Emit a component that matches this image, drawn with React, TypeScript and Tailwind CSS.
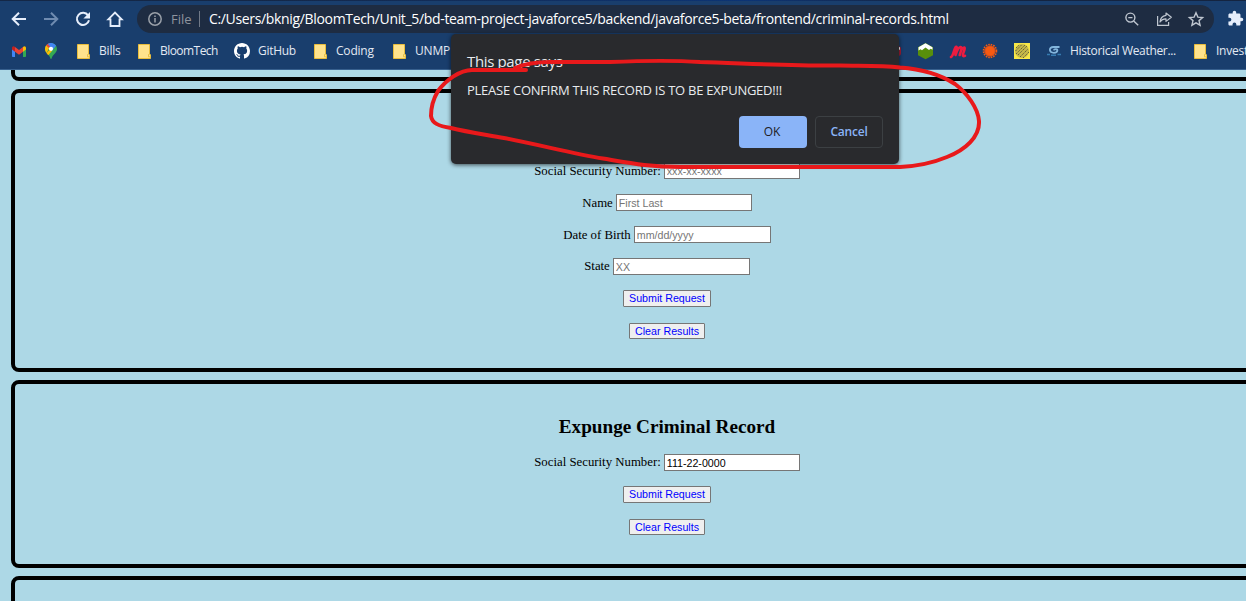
import type { ReactNode } from "react";

const ui = "font-['Open_Sans','Noto_Sans',sans-serif]";

function Folder() {
  return (
    <svg width="13" height="15" viewBox="0 0 13 15" className="block shrink-0">
      <path d="M0.5 0.5h11v9.6l1 .6v3.8h-12z" fill="#ffe38c" stroke="#e9bd3c" />
      <path d="M10.5 10.2v2.6h2" fill="none" stroke="#e9bd3c" strokeWidth=".9" />
    </svg>
  );
}

function Toolbar() {
  return (
    <div className="flex h-8 items-center pl-[11px]">
      <svg width="116" height="32" viewBox="11 2 116 32" className="block shrink-0" fill="none" stroke="#e6eefb" strokeWidth="2">
        <path d="M26 19H13M19 12.7L12.7 19L19 25.3" />
        <path d="M44 19H57M51 12.7L57.3 19L51 25.3" stroke="#6f8bb0" />
        <path d="M88.1 15.4A6.1 6.1 0 1 0 89 20.3" />
        <path d="M90 12v6.6h-6.6z" fill="#e6eefb" stroke="none" />
        <path d="M108.3 19.3L115 12.5L121.7 19.3H119.5V26H110.5V19.3Z" strokeWidth="1.8" />
      </svg>
      <div className="ml-[10px] mt-px flex h-7 w-[1077px] shrink-0 items-center rounded-full bg-[#1e2c42] pl-[11px]">
        <svg width="14" height="14" viewBox="0 0 14 14" className="block shrink-0" fill="none" stroke="#9aa0a9" strokeWidth="1.5">
          <circle cx="7" cy="7" r="6.2" />
          <path d="M7 6.1V10.4M7 3.4V4.9" />
        </svg>
        <span className="ml-[9px] w-[28px] shrink-0 whitespace-nowrap text-[13px] leading-5 text-[#8e949e]">File</span>
        <span className="h-4 w-px shrink-0 bg-[#717987]" />
        <span className="ml-[9px] w-[914px] shrink-0 whitespace-nowrap text-[14px] leading-5 tracking-[-0.34px] text-white">
          C:/Users/bknig/BloomTech/Unit_5/bd-team-project-javaforce5/backend/javaforce5-beta/frontend/criminal-records.html
        </span>
        <svg width="82" height="20" viewBox="1123 9 82 20" className="block shrink-0" fill="none" stroke="#bfc6d0" strokeWidth="1.4">
          <circle cx="1130.4" cy="17.6" r="4.5" />
          <path d="M1133.7 20.9L1138.2 25.3M1128.3 17.6h4.2" />
          <path d="M1157.6 16V25.3H1168.6V22" strokeWidth="1.2" />
          <path d="M1166 13L1171.3 17.3L1166 21.4V18.9C1162.9 18.8 1161.3 20 1160 22C1160.3 18.2 1162.3 15.8 1166 15.3Z" strokeWidth="1.2" strokeLinejoin="round" />
          <path d="M1196 12.7L1197.9 17.1L1202.6 17.5L1199 20.6L1200.1 25.2L1196 22.8L1191.9 25.2L1193 20.6L1189.4 17.5L1194.1 17.1Z" />
        </svg>
      </div>
      <svg width="17" height="17" viewBox="0 0 24 24" className="ml-[13px] block shrink-0" fill="#e6eefb">
        <path d="M20.5 11H19V7c0-1.1-.9-2-2-2h-4V3.5a2.5 2.5 0 0 0-5 0V5H4c-1.1 0-2 .9-2 2v3.8h1.5a2.7 2.7 0 0 1 0 5.4H2V20c0 1.1.9 2 2 2h3.8v-1.5a2.7 2.7 0 0 1 5.4 0V22H17c1.1 0 2-.9 2-2v-4h1.5a2.5 2.5 0 0 0 0-5z" />
      </svg>
    </div>
  );
}

function Label({ children, className }: { children: ReactNode; className: string }) {
  return <span className={`shrink-0 whitespace-nowrap text-[12px] leading-4 text-[#e3e9f3] ${className}`}>{children}</span>;
}

function Bookmarks() {
  return (
    <div className="flex h-8 items-center pl-3">
      <svg width="14" height="11" viewBox="0 0 14 11" className="block shrink-0">
        <path d="M0 2v8.2c0 .5.3.8.8.8H3V4z" fill="#4285f4" />
        <path d="M14 2v8.2c0 .5-.3.8-.8.8H11V4z" fill="#34a853" />
        <path d="M3 1v4.8l4 3 4-3V1L7 4z" fill="#ea4335" />
        <path d="M0 2.2C0 .3 1.7-.3 3 1v4.8L0 3.6z" fill="#c5221f" />
        <path d="M14 2.2C14 .3 12.3-.3 11 1v4.8l3-2.2z" fill="#fbbc04" />
      </svg>
      <svg width="12" height="16" viewBox="0 0 12 16" className="ml-[19px] block shrink-0">
        <path d="M6 0a6 6 0 0 1 6 6c0 4-4.500 5.500-5.300 9.200-.2 1-1.200 1-1.400 0C4.500 11.500 0 10 0 6a6 6 0 0 1 6-6z" fill="#34a853" />
        <path d="M1.300 2.200L4.400 4.700L1.500 10C.5 8.600 0 7.500 0 6c0-1.500.5-2.800 1.300-3.800z" fill="#fbbc04" />
        <path d="M1.300 2.200A6 6 0 0 1 6 0l-1.600 4.700z" fill="#ea4335" />
        <path d="M3.500.5a6 6 0 0 1 7.600 2.300L7.600 7 4.400 4.700 2 2.700z" fill="#4285f4" />
        <path d="M1.300 2.200L2.600 1.100L5 3.500L4 5z" fill="#ea4335" />
        <path d="M4.200 7.200L7.400 7.500L3.200 12.300L1.500 10z" fill="#fbbc04" />
        <circle cx="6" cy="5.800" r="2.100" fill="#fff" />
      </svg>
      <div className="ml-5 flex shrink-0 items-center"><Folder /><Label className="ml-[9px] w-[39px] tracking-[-0.2px]">Bills</Label></div>
      <div className="flex shrink-0 items-center"><Folder /><Label className="ml-[9px] w-[74px] tracking-[-0.55px]">BloomTech</Label></div>
      <svg width="16" height="16" viewBox="0 0 16 16" className="block shrink-0" fill="#fff">
        <path d="M8 0C3.580 0 0 3.580 0 8c0 3.540 2.290 6.530 5.470 7.590.4.070.55-.17.55-.38v-1.490c-2.230.48-2.690-.94-2.690-.94-.36-.92-.89-1.170-.89-1.170-.73-.5.060-.49.060-.49.8.060 1.230.83 1.230.83.71 1.220 1.870.87 2.330.66.070-.52.280-.87.5-1.070-1.770-.2-3.640-.89-3.640-3.950 0-.87.31-1.590.82-2.150-.08-.2-.36-1.020.080-2.120 0 0 .67-.21 2.200.82a7.600 7.600 0 0 1 4 0c1.530-1.040 2.200-.82 2.200-.82.44 1.100.16 1.920.080 2.120.51.56.82 1.270.82 2.150 0 3.070-1.870 3.750-3.650 3.950.29.25.54.73.54 1.480v2.200c0 .21.150.46.55.38A8 8 0 0 0 16 8c0-4.420-3.580-8-8-8z" />
      </svg>
      <Label className="ml-2 w-[56px] tracking-[-0.3px]">GitHub</Label>
      <div className="flex shrink-0 items-center"><Folder /><Label className="ml-[9px] w-[57px] tracking-[-0.2px]">Coding</Label></div>
      <div className="flex w-[494px] shrink-0 items-center"><Folder /><Label className="ml-[9px] tracking-[-0.2px]">UNMP</Label></div>
      <svg width="150" height="20" viewBox="887 41 150 20" className="block shrink-0">
        <rect x="887" y="46" width="14" height="10" rx="3" fill="#a31e35" />
        <path d="M897 48l3-1v3z" fill="#fff" />
        <path d="M925.500 43L933 47.300V55.200L925.500 59.300L918 55.200V47.300Z" fill="#588f0b" />
        <path d="M925.500 43.200L932.500 47.300V49.800L930.700 48.800L929 50L925.500 47.600L922 50.300L920.500 49.200L918.500 50.600V47.300Z" fill="#fff" />
        <path d="M951 57C953.500 56 953.600 49.600 955.700 47C957.900 46.200 956.900 50.500 955.500 55C957 50.300 958.700 47.300 960.600 47C962.500 47 960.900 51.500 959.700 55C961 50.500 962.700 47.300 964.500 47.600C965.900 48.500 962 54.300 963 55.700C963.700 56.500 964.500 56 965 55.800" fill="none" stroke="#ed1c40" strokeWidth="2.600" strokeLinecap="round" strokeLinejoin="round" />
        <circle cx="990" cy="51" r="5.600" fill="#f75a12" />
        <circle cx="990" cy="51" r="6.500" fill="none" stroke="#f75a12" strokeWidth="1.600" strokeDasharray="1.550 1" />
        <circle cx="990" cy="51" r="5" fill="none" stroke="#b94423" strokeWidth=".5" />
        <rect x="1014" y="43" width="16" height="16" fill="#f7e748" />
        <circle cx="1022" cy="51" r="7" fill="#c5b848" />
        <path d="M1016 48l3-3M1015.500 51l6.500-6.500M1016 54l9-9M1018 55l9-9M1020 57l8-8M1023 58l6-6" stroke="#635f3c" strokeWidth="1" strokeDasharray="1.500 .8" />
      </svg>
      <svg width="14" height="12" viewBox="0 0 14 12" className="ml-[10px] block shrink-0" fill="none">
        <path d="M12.500 2H6.500C3.800 2 2.600 3.600 2.900 5.200C3.600 8.700 10.300 8.600 10.400 5.200C10.400 3.700 7 3.700 6.800 5.300" stroke="#83b5dc" strokeWidth="1.800" />
        <path d="M0 9.600h3m1 .7h5M10.500 9.600H14" stroke="#367bb1" strokeWidth="1.500" />
      </svg>
      <Label className="ml-[9px] w-[124px] tracking-[-0.33px]">Historical Weather...</Label>
      <div className="flex shrink-0 items-center"><Folder /><Label className="ml-[9px] tracking-[-0.25px]">Invest</Label></div>
    </div>
  );
}

function Field({ label, placeholder, value, className = "w-[136px]", labelClass = "" }: { label: string; placeholder?: string; value?: string; className?: string; labelClass?: string }) {
  return (
    <label className="mb-[15px] flex h-[17px] items-center justify-center gap-[3px] text-[12.8px] leading-[17px] text-black">
      <span className={`whitespace-nowrap ${labelClass}`}>{label}</span>
      <input
        className={`h-[17px] rounded-none border border-[#767676] bg-white px-[2px] py-0 font-['Liberation_Sans',sans-serif] text-[10.67px] leading-[15px] text-black placeholder:text-[#757575] ${className}`}
        placeholder={placeholder}
        defaultValue={value}
      />
    </label>
  );
}

function Actions() {
  const base = "block rounded-[1px] border border-[#767676] bg-[#efefef] p-0 text-center font-['Liberation_Sans',sans-serif] text-[10.67px] text-[#0000ff]";
  return (
    <div className="flex flex-col items-center gap-4">
      <button className={`${base} h-[17px] w-[88px] leading-[15px]`}>Submit Request</button>
      <button className={`${base} h-4 w-[76px] leading-[14px]`}>Clear Results</button>
    </div>
  );
}

const panel = "w-[1312px] shrink-0 rounded-lg border-4 border-black";

export default function App() {
  return (
    <div className="relative flex h-[601px] w-[1246px] flex-col overflow-hidden bg-[#add8e6]">
      <header className={`flex h-[70px] shrink-0 flex-col overflow-hidden border-b border-[#37608e] bg-[#193e6d] ${ui}`}>
        <div className="h-px shrink-0 bg-linear-to-r from-[#142746] from-20% via-[#0c3474] via-60% to-[#142440] to-75%" />
        <div className="mt-px shrink-0"><Toolbar /></div>
        <div className="mt-px shrink-0"><Bookmarks /></div>
      </header>
      <main className="flex min-h-0 flex-1 flex-col gap-2 overflow-hidden pl-[11px] font-['Liberation_Serif',serif]">
        <section className={`${panel} h-[11px] rounded-t-none border-t-0`} />
        <section className={`${panel} h-[283px] pt-[69px]`}>
          <Field label="Social Security Number:" placeholder="xxx-xx-xxxx" labelClass="pt-[2px]" />
          <Field label="Name" placeholder="First Last" labelClass="pt-[2px]" />
          <Field label="Date of Birth" placeholder="mm/dd/yyyy" className="w-[137px]" labelClass="pt-[2px]" />
          <Field label="State" placeholder="XX" className="w-[137px]" />
          <Actions />
        </section>
        <section className={`${panel} h-[188px] pt-[31px]`}>
          <h2 className="mb-[15px] h-6 text-center text-[19.2px] font-bold leading-6 text-black">Expunge Criminal Record</h2>
          <Field label="Social Security Number:" value="111-22-0000" />
          <Actions />
        </section>
        <section className={`${panel} h-24`} />
      </main>
      <div role="dialog" className={`absolute left-[451px] top-[34px] flex h-[130px] w-[448px] flex-col rounded-[5px] bg-[#292a2d] px-4 pb-4 pt-[17px] shadow-[0_1px_4px_rgba(0,0,0,0.65)] ${ui}`}>
        <div className="whitespace-nowrap text-[15px] leading-5 tracking-[-0.35px] text-[#e8eaed]">This page says</div>
        <div className="mt-[9px] whitespace-nowrap text-[13px] leading-5 tracking-[-0.25px] text-[#e8eaed]">PLEASE CONFIRM THIS RECORD IS TO BE EXPUNGED!!!</div>
        <div className="mt-auto flex justify-end gap-2">
          <button className="h-8 w-[68px] rounded-[4px] bg-[#8ab4f8] pr-[2px] text-[12px] font-medium text-[#202124]">OK</button>
          <button className="h-8 w-[68px] rounded-[4px] border border-[#3c4043] text-[12px] font-semibold tracking-[-0.2px] text-[#8ab4f8]">Cancel</button>
        </div>
      </div>
      <svg className="pointer-events-none absolute left-0 top-0" width="1246" height="601" viewBox="0 0 1246 601" fill="none" stroke="#e8191b" strokeWidth="4" strokeLinecap="round" strokeLinejoin="round">
        <path d="M526 70H472C460 70 446 80 438 91C432 101 431 110 431 116C432 123 438 126 451 128C467 132 485 134.500 504 138C540 145 575 154 603 158.500C630 163 650 167 680 167H900C920 166 935 162 947 157C965 150 980 137 979 121C978 108 967 93 955 84C938 73 920 69 900 67.500C880 65 860 66 840 65.500C790 66 740 63 700 62C670 60 635 61 610 62H550C535 62 522 65 515 68" />
      </svg>
    </div>
  );
}
